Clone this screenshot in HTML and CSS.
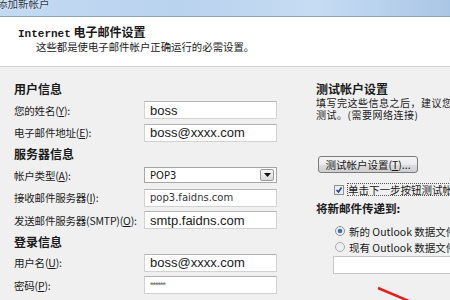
FILE: index.html
```html
<!DOCTYPE html>
<html lang="zh-CN">
<head>
  <meta charset="UTF-8" />
  <title>添加新帐户</title>
  <meta name="viewport" content="width=device-width, initial-scale=1.0" />
  <link rel="stylesheet" href="styles.css">
</head>
<body>
  <div class="window">

    <!-- Title bar -->
    <div class="titlebar">添加新帐户</div>

    <!-- Header -->
    <div class="header">
      <h1><span class="latin">Internet</span> 电子邮件设置</h1>
      <p>这些都是使电子邮件帐户正确运行的必需设置。</p>
    </div>

    <div class="content">
      <!-- Left: account fields -->
      <div class="left">
        <h2>用户信息</h2>
        <div class="row">
          <span class="label">您的姓名(<u>Y</u>):</span>
          <div class="field big">boss</div>
        </div>
        <div class="row">
          <span class="label">电子邮件地址(<u>E</u>):</span>
          <div class="field big">boss@xxxx.com</div>
        </div>

        <h2>服务器信息</h2>
        <div class="row">
          <span class="label">帐户类型(<u>A</u>):</span>
          <div class="field select">
            <span>POP3</span>
            <span class="drop"><svg width="7" height="4" viewBox="0 0 7 4"><path d="M0 0h7L3.5 4z" fill="#111"/></svg></span>
          </div>
        </div>
        <div class="row">
          <span class="label">接收邮件服务器(<u>I</u>):</span>
          <div class="field small">pop3.faidns.com</div>
        </div>
        <div class="row">
          <span class="label">发送邮件服务器(SMTP)(<u>O</u>):</span>
          <div class="field big">smtp.faidns.com</div>
        </div>

        <h2>登录信息</h2>
        <div class="row">
          <span class="label">用户名(<u>U</u>):</span>
          <div class="field big">boss@xxxx.com</div>
        </div>
        <div class="row">
          <span class="label">密码(<u>P</u>):</span>
          <div class="field pass">******</div>
        </div>
      </div>

      <!-- Right: test settings -->
      <div class="right">
        <h2>测试帐户设置</h2>
        <p class="note">填写完这些信息之后，建议您单击下面的按钮进行帐户<br>测试。(需要网络连接)</p>
        <button class="test-btn">测试帐户设置(<u>T</u>)...</button>
        <div class="check">
          <svg width="10" height="10" viewBox="0 0 10 10">
            <rect x="0.5" y="0.5" width="9" height="9" fill="#e8eef6" stroke="#8e8f8f"/>
            <path d="M2.5 5l2 2 3-4.5" fill="none" stroke="#2a3f8f" stroke-width="1.6"/>
          </svg>
          <span class="focus">单击下一步按钮测试帐户设置(<u>S</u>)</span>
        </div>
        <h3>将新邮件传递到:</h3>
        <div class="radio first">
          <svg width="10" height="10" viewBox="0 0 10 10">
            <circle cx="5" cy="5" r="4.5" fill="#eef0f3" stroke="#8e8f8f"/>
            <circle cx="5" cy="5" r="2.3" fill="#3d6fb8"/>
          </svg>
          <span>新的 Outlook 数据文件(<u>W</u>)</span>
        </div>
        <div class="radio">
          <svg width="10" height="10" viewBox="0 0 10 10">
            <circle cx="5" cy="5" r="4.5" fill="#eef0f3" stroke="#a8a8a8"/>
          </svg>
          <span>现有 Outlook 数据文件(<u>X</u>)</span>
        </div>
        <div class="field wide"></div>
      </div>
    </div>

    <!-- red arrow drawn over the dialog -->
    <svg class="arrow" width="60" height="20" viewBox="0 0 60 20">
      <path d="M2 2L40 18" stroke="#e3201c" stroke-width="2.5" fill="none"/>
    </svg>
  </div>
</body>
</html>
```

FILE: styles.css
```css
body {
  margin: 0;
  font-family: "Noto Sans CJK SC", "Liberation Sans", sans-serif;
  font-size: 10.5px;
  color: #1a1a1a;
  background-color: #f0f0f0;
}

.window {
  position: relative;
  width: 450px;
  height: 300px;
  overflow: hidden;
  background-color: #f0f0f0;
}

.titlebar {
  height: 16px;
  line-height: 8px;
  font-size: 10.5px;
  text-indent: -3px;
  color: #2b3a4e;
  text-shadow: 0 0 3px #fff;
  white-space: nowrap;
  overflow: hidden;
  background: linear-gradient(90deg, #c3daf2 0%, #b9d2ee 40%, #c6dcf3 70%, #aac6e6 100%);
  border-bottom: 1px solid #8fa4ba;
}

.header {
  height: 50px;
  padding: 8px 0 0 18px;
  box-sizing: border-box;
  background-color: #fff;
  border-bottom: 1px solid #d5d5d5;
}

.header h1 {
  margin: 0;
  font-size: 12px;
  line-height: 14px;
  font-weight: bold;
}

.header .latin {
  font-family: "Liberation Mono", monospace;
  font-size: 11px;
}

.header p {
  margin: 0 0 0 18px;
  font-size: 10.4px;
  line-height: 12px;
}

.content {
  display: flex;
  padding-top: 12px;
}

.left {
  flex-shrink: 0;
  width: 316px;
  padding-left: 14px;
  box-sizing: border-box;
}

h2 {
  margin: 0;
  height: 20px;
  line-height: 20px;
  font-size: 12px;
  font-weight: bold;
}

.row {
  height: 22.5px;
  display: flex;
  align-items: center;
}

.label {
  width: 130px;
  flex-shrink: 0;
  white-space: nowrap;
  font-size: 10.5px;
  letter-spacing: -0.2px;
}

.field {
  width: 133px;
  height: 18px;
  flex-shrink: 0;
  box-sizing: border-box;
  background: #fff;
  border: 1px solid #d2d2d2;
  border-top-color: #b4b4b4;
  padding-left: 5px;
  display: flex;
  align-items: center;
  white-space: nowrap;
  font-family: "Liberation Sans", sans-serif;
}

.field.big {
  font-size: 13px;
}

.field.small {
  font-family: "DejaVu Sans", sans-serif;
  font-size: 10px;
  color: #333;
}

.field.pass {
  font-size: 9px;
  color: #666;
  letter-spacing: -1px;
}

.field.select {
  justify-content: space-between;
  font-family: "DejaVu Sans", sans-serif;
  font-size: 10px;
  padding-right: 2px;
  height: 16px;
  border-color: #a5a5a5;
}

.drop {
  width: 14px;
  height: 12px;
  box-sizing: border-box;
  border: 1px solid #9a9a9a;
  border-radius: 2px;
  background: linear-gradient(#f6f6f6, #d9d9d9);
  display: flex;
  align-items: center;
  justify-content: center;
}

.right {
  flex: 1;
  min-width: 0;
  white-space: nowrap;
}

.right h2 {
  margin-top: 2px;
  height: 16px;
  line-height: 16px;
}

.note {
  margin: 0;
  font-size: 10px;
  line-height: 12px;
  letter-spacing: 0.5px;
}

.test-btn {
  display: block;
  margin: 35px 0 0 2px;
  width: 100px;
  height: 17px;
  padding: 0;
  font-family: inherit;
  font-size: 10.5px;
  color: #1a1a1a;
  border: 1px solid #7a7a7a;
  border-radius: 3px;
  background: linear-gradient(#f4f4f4 0%, #ebebeb 50%, #dddddd 51%, #cfcfcf 100%);
}

.check {
  margin: 10px 0 0 18px;
  height: 13px;
  display: flex;
  align-items: center;
  gap: 3px;
  font-size: 10.5px;
}

.check svg,
.radio svg {
  flex-shrink: 0;
}

.focus {
  border: 1px dotted #555;
  line-height: 11px;
}

h3 {
  margin: 5px 0 0;
  font-size: 11.5px;
  line-height: 14px;
  font-weight: bold;
}

.radio {
  height: 16px;
  display: flex;
  align-items: center;
  gap: 4px;
  margin-left: 19px;
  font-size: 10.5px;
}

.radio.first {
  margin-top: 8px;
}

.field.wide {
  width: 140px;
  margin: 1px 0 0 17px;
  border-color: #c6c6c6;
}

.arrow {
  position: absolute;
  left: 376px;
  top: 286px;
}
```
